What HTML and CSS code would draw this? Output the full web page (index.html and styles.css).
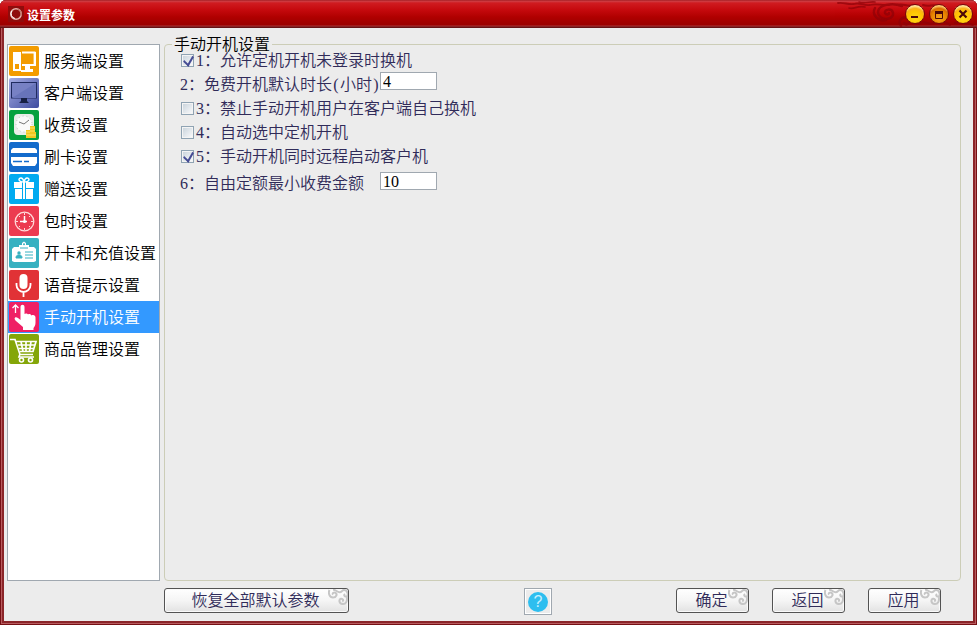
FILE: index.html
```html
<!DOCTYPE html>
<html lang="zh-CN">
<head>
<meta charset="UTF-8" />
<meta name="viewport" content="width=device-width, initial-scale=1.0" />
<title>设置参数</title>
<link rel="stylesheet" href="styles.css">
</head>
<body>
<svg class="defs" width="0" height="0">
  <defs>
    <symbol id="curl" viewBox="0 0 20 17">
      <g fill="none" stroke="#c6c6c6" stroke-width="2">
        <path d="M1.500 1 C0 4 1.500 8.500 5 8.500 C8.500 8.500 9.500 5 7.500 3.800 C6 3 4 4 5 5.600" />
        <path d="M5 0.800 C8 0.500 9 3.500 12 3.200 C14.500 3 14 1 16 1 C20 1 20.500 7 18.500 7.500 C16.500 8 15.500 6 17 5" />
        <path d="M18.800 8 C19.500 12 18 15.500 14.500 15 C11 14.500 10.500 10.500 13 9.800 C15 9.500 16 11.800 14.200 12.300" />
      </g>
    </symbol>
  </defs>
</svg>

<div class="window">
<!-- 标题栏 -->
<div class="title-bar">
  <svg class="logo" width="16" height="16" viewBox="0 0 16 16">
    <rect width="16" height="16" fill="#8f0c0c"/>
    <circle cx="8" cy="8" r="5.300" fill="none" stroke="#e5b5ac" stroke-width="1.600"/>
    <path d="M3.800 5 A5 5 0 0 0 7 12.500" fill="none" stroke="#fff" stroke-width="1"/>
    <path d="M10 3 A5.500 5.500 0 0 1 13 10" fill="none" stroke="#b96a60" stroke-width="1"/>
  </svg>
  <h1>设置参数</h1>
  <svg class="cloud" width="142" height="26" viewBox="0 0 142 26">
    <g fill="none" stroke="#8d0208" stroke-width="2.500" stroke-linecap="round" opacity="0.700">
      <path d="M3 2 C9 1 13 4 19 3 C25 1 28 5 35 4 C43 2 45 5 54 4" stroke-width="1.800"/>
      <path d="M14 7 C19 9 22 4 30 6 M24 1 C30 3 35 0 40 1" stroke-width="1.600"/>
      <path d="M67 5 C57 1 43 4 43 11 C43 20 59 20 58 12 C57 7 49 8 50 12 C51 14 54 14 54 12"/>
      <path d="M40 7 C36 14 44 21 51 19"/>
      <path d="M62 4 C68 2 72 6 80 4 M88 4 C94 6 98 3 103 5" stroke-width="2"/>
      <path d="M66 25 C62 19 69 14 73 18 C76 22 72 25 69 22"/>
      <path d="M84 23 C90 18 93 25 99 22 C104 19 111 21 115 24 M120 22 C127 20 133 22 138 24" stroke-width="2"/>
    </g>
  </svg>
  <div class="window-buttons">
    <button class="round-button" aria-label="最小化">
      <svg width="18" height="18" viewBox="0 0 18 18"><path d="M5 12h7" stroke="#4b0808" stroke-width="2"/></svg>
    </button>
    <button class="round-button maximize" aria-label="最大化">
      <svg width="18" height="18" viewBox="0 0 18 18"><path d="M5.500 6v7.500h7V6" fill="none" stroke="#4b0808" stroke-width="1"/><path d="M5 6h8v3H5z" fill="#4b0808"/></svg>
    </button>
    <button class="round-button" aria-label="关闭">
      <svg width="18" height="18" viewBox="0 0 18 18"><path d="M5.500 5.500l7 7M12.500 5.500l-7 7" stroke="#4b0808" stroke-width="2.200"/></svg>
    </button>
  </div>
</div>

<div class="content">
<div class="main">
<!-- 设置分类 -->
<ul class="menu">
  <li>
    <svg width="30" height="30" viewBox="0 0 30 30">
      <rect width="30" height="30" rx="2" fill="#f39c00"/>
      <path d="M5 7h6v17H5z" fill="none" stroke="#fff" stroke-width="2"/>
      <path d="M6 8h4v10H6z" fill="#fff"/>
      <path d="M13 6.500h12.500v12.500H13" fill="none" stroke="#fff" stroke-width="1.800"/>
      <path d="M16 20h5v3h3v3H12v-2h4z" fill="#fff"/>
      <path d="M26.500 6v14" stroke="#fff"/>
    </svg>
    <span>服务端设置</span>
  </li>
  <li>
    <svg width="30" height="30" viewBox="0 0 30 30">
      <defs><linearGradient id="blue" x1="0" y1="0" x2="1" y2="1"><stop offset="0" stop-color="#a5ace3"/><stop offset="1" stop-color="#3e4b9f"/></linearGradient></defs>
      <rect width="30" height="30" rx="2" fill="url(#blue)"/>
      <rect x="2.500" y="4.500" width="25" height="15.500" fill="#7781c4" stroke="#202b60"/>
      <path d="M3 20L27 5v15z" fill="#6874ba"/>
      <path d="M12 20h6v3l2 2H10l2-2z" fill="#172044"/>
    </svg>
    <span>客户端设置</span>
  </li>
  <li>
    <svg width="30" height="30" viewBox="0 0 30 30">
      <rect width="30" height="30" rx="2" fill="#06a13e"/>
      <rect x="5" y="4" width="20" height="21" rx="4" fill="#e9ede9"/>
      <circle cx="15" cy="14" r="8" fill="#fafafa" stroke="#c1c4c0" stroke-dasharray="1 3"/>
      <path d="M10 12l5 2 5-4" fill="none" stroke="#777"/>
      <path d="M17 20h4v-4h5v6h1v6H17z" fill="#f2c621"/>
      <path d="M17 22h4M21 18h5M21 21h5M17 25h10" stroke="#ffe365"/>
    </svg>
    <span>收费设置</span>
  </li>
  <li>
    <svg width="30" height="30" viewBox="0 0 30 30">
      <rect width="30" height="30" rx="2" fill="#126bcc"/>
      <path d="M4 6h22l2 2v3H2V8zM2 15h26v6l-2 3H4l-2-3z" fill="#fff"/>
      <path d="M4 19.500h9M15 19.500h5" stroke="#126bcc" stroke-width="1.400"/>
    </svg>
    <span>刷卡设置</span>
  </li>
  <li>
    <svg width="30" height="30" viewBox="0 0 30 30">
      <rect width="30" height="30" rx="2" fill="#00aaf0"/>
      <path d="M5 8h8v6H5zM17 8h8v6h-8zM6 15h7v10H6zM17 15h7v10h-7zM14 8h2v17h-2z" fill="#fff"/>
      <path d="M15 8C9 8 9 4 12 4c2 0 3 4 3 4s1-4 3-4c3 0 3 4-3 4z" fill="none" stroke="#fff" stroke-width="1.500"/>
    </svg>
    <span>赠送设置</span>
  </li>
  <li>
    <svg width="30" height="30" viewBox="0 0 30 30">
      <rect width="30" height="30" rx="2" fill="#ec3b50"/>
      <circle cx="15.500" cy="15.500" r="9.300" fill="none" stroke="#ffd8d8" stroke-width="1.300"/>
      <path d="M15.500 10v6M11 15.500h7" stroke="#fff" stroke-width="1.500"/>
      <path d="M15.500 7v2M15.500 22v2M7 15.500h2M22 15.500h2M10 10l1 1M21 10l-1 1M10 21l1-1M21 21l-1-1" stroke="#ffd8d8"/>
      <circle cx="15.500" cy="15.500" r="1.500" fill="#fff"/>
    </svg>
    <span>包时设置</span>
  </li>
  <li>
    <svg width="30" height="30" viewBox="0 0 30 30">
      <rect width="30" height="30" rx="2" fill="#37b1c1"/>
      <path d="M5 9h5V7h3V5l2-1.500L17 5v2h3v2h5l2 2v12l-2 1H5l-2-1V11z" fill="#fff"/>
      <path d="M11 10h8M7 20c0-3 2-3 3-3s3 0 3 3zM16 14h8M16 17h8M16 20h8" fill="#37b1c1" stroke="#37b1c1"/>
      <circle cx="10" cy="15" r="1.700" fill="#37b1c1"/>
      <circle cx="15" cy="6.200" r="1" fill="#37b1c1"/>
    </svg>
    <span>开卡和充值设置</span>
  </li>
  <li>
    <svg width="30" height="30" viewBox="0 0 30 30">
      <rect width="30" height="30" rx="2" fill="#e13236"/>
      <rect x="10.500" y="4" width="8" height="15" rx="4" fill="#fff"/>
      <path d="M7.500 13v2a7 7 0 0 0 14 0v-2M14.500 22v5" fill="none" stroke="#fff" stroke-width="1.800"/>
    </svg>
    <span>语音提示设置</span>
  </li>
  <li class="active">
    <svg width="30" height="30" viewBox="0 0 30 30">
      <rect width="30" height="30" rx="2" fill="#ef2065"/>
      <path d="M6.500 11V3M3.500 6l3-3 3 3" fill="none" stroke="#fff" stroke-width="1.300"/>
      <path d="M11.500 5c0-3 4-3 4 0v7c1-1 3-.5 3.500.500 1.500-1 3 0 3.500 1 2-1 4 0 4 2v5c0 3-1 4-2 5.500V28H14v-3L7 19c-3-3-.5-5 2-3l2.500 2z" fill="#fff"/>
    </svg>
    <span>手动开机设置</span>
  </li>
  <li>
    <svg width="30" height="30" viewBox="0 0 30 30">
      <rect width="30" height="30" rx="2" fill="#84a608"/>
      <path d="M1 5.500h5l5 15h13M7 7.500h20l-3 10H11M9 11h17M10 14.500h15M12 7.500l2 10M17 7.500v10M22 7.500l-1.500 10M11 20l-1 3h15" fill="none" stroke="#fff" stroke-width="1.700"/>
      <circle cx="12.500" cy="26" r="2" fill="none" stroke="#fff" stroke-width="1.600"/>
      <circle cx="21.500" cy="26" r="2" fill="none" stroke="#fff" stroke-width="1.600"/>
    </svg>
    <span>商品管理设置</span>
  </li>
</ul>

<!-- 手动开机设置 -->
<fieldset class="panel">
  <legend>手动开机设置</legend>
  <div class="row">
    <label><input type="checkbox" checked />1：允许定机开机未登录时换机</label>
  </div>
  <div class="row">
    <label for="freeHours">2：免费开机默认时长<i>(</i>小时<i>)</i></label>
    <input type="text" id="freeHours" value="4" />
  </div>
  <div class="row">
    <label><input type="checkbox" />3：禁止手动开机用户在客户端自己换机</label>
  </div>
  <div class="row">
    <label><input type="checkbox" />4：自动选中定机开机</label>
  </div>
  <div class="row">
    <label><input type="checkbox" checked />5：手动开机同时远程启动客户机</label>
  </div>
  <div class="row amount">
    <label for="minAmount">6：自由定额最小收费金额</label>
    <input type="text" id="minAmount" value="10" />
  </div>
</fieldset>
</div>

<!-- 底部按钮 -->
<div class="footer">
  <button class="button reset">恢复全部默认参数<svg width="20" height="17"><use href="#curl"/></svg></button>
  <button class="help" aria-label="帮助"><span>?</span></button>
  <div class="actions">
    <button class="button">确定<svg width="20" height="17"><use href="#curl"/></svg></button>
    <button class="button">返回<svg width="20" height="17"><use href="#curl"/></svg></button>
    <button class="button">应用<svg width="20" height="17"><use href="#curl"/></svg></button>
  </div>
</div>
</div>
</div>
</body>
</html>
```
FILE: styles.css
```css
* {
    box-sizing: border-box;
}
body {
    margin: 0;
    background-color: #fff;
    font-family: "Liberation Serif", "Noto Sans CJK SC", sans-serif;
    font-size: 16px;
    font-weight: 350;
    overflow: hidden;
}
button, input {
    font: inherit;
    margin: 0;
    padding: 0;
}
.defs {
    position: absolute;
}
.window {
    width: 977px;
    height: 625px;
    display: flex;
    flex-direction: column;
    border-radius: 6px 6px 0 0;
    overflow: hidden;
    background-color: #8b2529;
    box-shadow: inset 0 0 0 1px #761014, inset 0 0 0 2px #b85c5f;
}
.title-bar {
    position: relative;
    height: 28px;
    flex: none;
    display: flex;
    align-items: center;
    padding: 0 4px 0 8px;
    background: linear-gradient(#981015 0, #cd4248 1px, #d01b20 3px, #c5090d 10px, #b00000 17px, #9b0000 25px, #a93639 26px, #671114 27px);
}
.title-bar h1 {
    margin: 4px 0 0 3px;
    color: #fff;
    font-size: 12px;
    line-height: 16px;
    font-weight: bold;
}
.cloud {
    position: absolute;
    top: 1px;
    right: 0;
}
.window-buttons {
    position: relative;
    display: flex;
    gap: 4px;
    margin-left: auto;
}
.round-button {
    width: 20px;
    height: 20px;
    border: 1px solid #76080a;
    border-radius: 50%;
    background: radial-gradient(circle at 50% 75%, #ffd817 0, #ffc400 45%, #fbb21a 62%, #ffe9a0 78%);
}
.round-button svg {
    display: block;
}
.round-button.maximize {
    background: radial-gradient(circle at 50% 75%, #f8a51b 0, #e88500 45%, #d96d00 62%, #ffd072 78%);
}
.content {
    flex: 1;
    margin: 0 4px 4px;
    padding: 16px 12px 0 3px;
    background-color: #ececec;
}
.main {
    display: flex;
    gap: 4px;
    height: 537px;
}
.menu {
    width: 153px;
    margin: 0;
    padding: 0;
    list-style: none;
    border: 1px solid #a0a8b0;
    background-color: #fff;
}
.menu li {
    display: flex;
    align-items: center;
    gap: 5px;
    height: 32px;
    padding-left: 1px;
    color: #000;
    line-height: 32px;
    white-space: nowrap;
}
.menu li span {
    padding-top: 2px;
}
.menu li svg {
    flex: none;
}
.menu li.active {
    background-color: #3399ff;
    color: #fff;
}
.panel {
    position: relative;
    flex: 1;
    min-width: 0;
    margin: 0;
    padding: 4px 0 0 15px;
    border: 1px solid #cccdb7;
    border-radius: 4px;
    color: #302b59;
}
.panel legend {
    position: absolute;
    top: -11px;
    left: 7px;
    padding: 1px 2px 0;
    background-color: #ececec;
    color: #000;
    line-height: 20px;
}
.row {
    display: flex;
    align-items: center;
    position: relative;
    height: 24px;
    line-height: 24px;
    white-space: nowrap;
}
.row label {
    display: flex;
    align-items: center;
}
.row i {
    width: 8px;
    font-style: normal;
    text-align: center;
}
.row input[type="checkbox"] {
    appearance: none;
    width: 13px;
    height: 13px;
    margin: 0 2px 2px 1px;
    border: 1px solid #8fa3b3;
    background: linear-gradient(135deg, #cbd5dd, #f7f8fa) center / 9px 9px no-repeat #f4f4f4;
}
.row input[type="checkbox"]:checked::after {
    content: "";
    display: block;
    width: 5px;
    height: 9px;
    margin: -1px 0 0 3px;
    border: solid #454b94;
    border-width: 0 2px 2px 0;
    transform: rotate(30deg) skewY(14deg);
}
.row input[type="text"] {
    width: 57px;
    height: 18px;
    margin-bottom: 8px;
    padding: 2px 0 0 2px;
    border: 1px solid #a0a8b0;
    background-color: #fff;
    color: #000;
}
.row.amount {
    margin-top: 3px;
}
.row.amount label {
    width: 200px;
}
.row.amount input[type="text"] {
    margin-bottom: 6px;
}
.footer {
    display: flex;
    align-items: flex-start;
    margin: 7px 0 0 157px;
}
.button {
    position: relative;
    width: 73px;
    height: 25px;
    padding-right: 2px;
    border: 1px solid #535353;
    border-radius: 3px;
    background: linear-gradient(#fff, #f5f5f5 50%, #e2e2e2);
    box-shadow: inset 0 0 0 1px #fafafa;
    color: #302b59;
    line-height: 22px;
}
.button svg {
    position: absolute;
    top: 0;
    right: 0;
}
.button.reset {
    width: 185px;
}
.help {
    width: 28px;
    height: 27px;
    margin-left: 175px;
    border: 1px solid #a0a8b0;
    background-color: #ececec;
    box-shadow: inset 0 0 0 1px #fff;
}
.help span {
    display: block;
    width: 20px;
    height: 20px;
    margin: 0 auto;
    border-radius: 50%;
    background-color: #2dbeef;
    color: #c5f0ff;
    font: 16px/20px "Liberation Sans", sans-serif;
}
.actions {
    display: flex;
    gap: 23px;
    margin-left: 124px;
}
```
